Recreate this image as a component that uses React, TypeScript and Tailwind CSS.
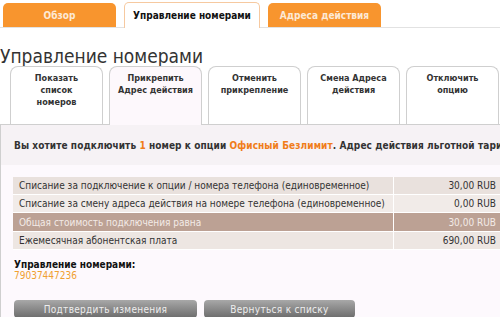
import React from "react";

const font = { fontFamily: '"DejaVu Sans Condensed", "DejaVu Sans", Verdana, sans-serif' };

export default function App() {
  const subtabs = [
    { t: ["Показать", "список", "номеров"], active: false },
    { t: ["Прикрепить", "Адрес действия"], active: true },
    { t: ["Отменить", "прикрепление"], active: false },
    { t: ["Смена Адреса", "действия"], active: false },
    { t: ["Отключить", "опцию"], active: false },
  ];
  const rows = [
    { l: "Списание за подключение к опции / номера телефона (единовременное)", v: "30,00 RUB", bg: "bg-[#e9e1dd]", c: "text-[#333]" },
    { l: "Списание за смену адреса действия на номере телефона (единовременное)", v: "0,00 RUB", bg: "bg-[#f1ebe8]", c: "text-[#333]" },
    { l: "Общая стоимость подключения равна", v: "30,00 RUB", bg: "bg-[#bca194]", c: "text-[#f3ebe7]" },
    { l: "Ежемесячная абонентская плата", v: "690,00 RUB", bg: "bg-[#ede6e2]", c: "text-[#333]" },
  ];
  return (
    <div className="w-[500px] h-[317px] overflow-hidden bg-white" style={font}>
      <div className="flex items-end gap-[8px] pl-[3px] pt-[3px] border-b border-[#e2e2e2] h-[28px]">
        <div className="w-[113px] h-[24px] rounded-t-[5px] bg-[#f8952e] text-[#fde9d5] text-[10px] font-bold flex items-center justify-center whitespace-nowrap">Обзор</div>
        <div className="w-[136px] h-[26px] rounded-t-[5px] bg-white border border-b-0 border-[#f6c9a0] text-[#111] text-[10px] font-bold flex items-center justify-center -mb-px whitespace-nowrap">Управление номерами</div>
        <div className="w-[113px] h-[24px] rounded-t-[5px] bg-[#f8952e] text-[#fde9d5] text-[10px] font-bold flex items-center justify-center whitespace-nowrap">Адреса действия</div>
      </div>
      <div className="text-[19px] leading-[24px] text-[#333] mt-[16px] pl-0">Управление номерами</div>
      <div className="flex gap-[6px] pl-[10px] mt-[-2px] relative z-10">
        {subtabs.map((s, i) => (
          <div
            key={i}
            className={`w-[93px] h-[58px] rounded-t-[8px] border border-b-0 border-[#cfcfcf] text-center text-[9px] leading-[12px] font-bold text-[#333] pt-[5px] whitespace-nowrap ${s.active ? "bg-[#fdf8fc] h-[59px] -mb-px" : "bg-white"}`}
          >
            {s.t.map((x, j) => (
              <div key={j}>{x}</div>
            ))}
          </div>
        ))}
      </div>
      <div className="border-t border-l border-[#cfcfcf] bg-[#fdf9fd] h-[200px]">
        <div className="bg-[#f6f2f5] h-[40px] flex items-center pl-[13px] whitespace-nowrap text-[10px] tracking-[0.08px] font-bold text-[#333]">
          Вы хотите подключить&nbsp;<span className="text-[#f07d1a]">1</span>&nbsp;номер к опции&nbsp;<span className="text-[#f07d1a]">Офисный Безлимит</span>. Адрес действия льготной тарификации
        </div>
        <div className="ml-[12px] mt-[12px]">
          {rows.map((r, i) => (
            <div key={i} className={`flex ${r.bg} ${r.c} text-[10px] border-b border-white ${i === 2 ? "h-[19px]" : "h-[18px]"}`}>
              <div className="w-[381px] pl-[6px] flex items-center whitespace-nowrap border-r border-white">{r.l}</div>
              <div className="flex-1 pr-[4px] flex items-center justify-end whitespace-nowrap">{r.v}</div>
            </div>
          ))}
        </div>
        <div className="pl-[13px] mt-[9px] text-[10px] leading-[11px]">
          <div className="font-bold text-[#111]">Управление номерами:</div>
          <div className="text-[#f0a030]">79037447236</div>
        </div>
        <div className="flex gap-[7px] pl-[13px] mt-[19px]">
          <div className="w-[183px] h-[18px] rounded-[4px] bg-gradient-to-b from-[#a8a8a8] to-[#6c6c6c] text-[#eee] text-[10px] tracking-[0.3px] flex items-center justify-center">Подтвердить изменения</div>
          <div className="w-[151px] h-[18px] rounded-[4px] bg-gradient-to-b from-[#a8a8a8] to-[#6c6c6c] text-[#eee] text-[10px] tracking-[0.3px] flex items-center justify-center">Вернуться к списку</div>
        </div>
      </div>
    </div>
  );
}
